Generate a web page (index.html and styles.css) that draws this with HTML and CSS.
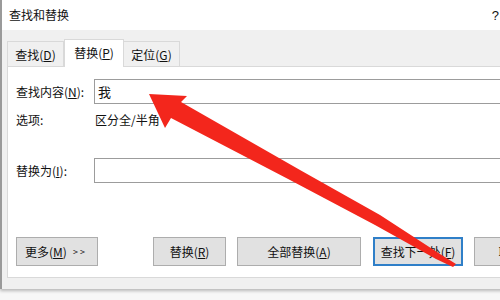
FILE: index.html
```html
<!DOCTYPE html>
<html lang="zh-CN">
<head>
<meta charset="utf-8">
<title>查找和替换</title>
<link rel="stylesheet" href="styles.css">
</head>
<body>
<div class="window">
  <div class="titlebar">
    <span class="title">查找和替换</span>
    <span class="help">?</span>
  </div>
  <div class="tabs">
    <div class="tab">查找(<u>D</u>)</div>
    <div class="tab active">替换(<u>P</u>)</div>
    <div class="tab">定位(<u>G</u>)</div>
  </div>
  <div class="panel">
    <div class="row first">
      <span class="label">查找内容(<u>N</u>):</span>
      <div class="input">我</div>
    </div>
    <div class="row options">
      <span class="label">选项:</span>
      <span class="optval">区分全/半角</span>
    </div>
    <div class="row replace">
      <span class="label">替换为(<u>I</u>):</span>
      <div class="input"></div>
    </div>
    <div class="buttons">
      <div class="btn more">更多(<u>M</u>) <span class="chev">&gt; &gt;</span></div>
      <div class="btn rep">替换(<u>R</u>)</div>
      <div class="btn all">全部替换(<u>A</u>)</div>
      <div class="btn next">查找下一处(<u>F</u>)</div>
      <div class="btn cancel">取消</div>
    </div>
  </div>
</div>
<svg class="arrow" width="500" height="300" viewBox="0 0 500 300" xmlns="http://www.w3.org/2000/svg">
  <polygon points="149,94 187,96 181,102 300,170 380,215 440,254 456,264 453,267 436,259 375,225 290,180 171,118 165,128" fill="#f3261c"/>
</svg>
</body>
</html>
```
FILE: styles.css
```css
html, body {
  margin: 0;
  padding: 0;
}
body {
  width: 500px;
  height: 300px;
  overflow: hidden;
  background: #f7f7f7;
  position: relative;
  font-family: "Noto Sans CJK SC", "Noto Sans", sans-serif;
  font-size: 12px;
  color: #111;
}
u {
  text-decoration: underline;
  text-underline-offset: 1px;
}
.window {
  width: 520px;
  height: 289px;
  background: #f0f0f0;
  border-left: 2px solid #9a9a9a;
  box-sizing: border-box;
  box-shadow: 0 2px 3px rgba(0,0,0,0.25);
}
.titlebar {
  height: 30px;
  background: #fff;
  display: flex;
  align-items: center;
  padding-left: 7px;
  width: 500px;
  box-sizing: border-box;
  position: relative;
}
.title {
  line-height: 16px;
  padding-bottom: 1px;
}
.help {
  margin-left: auto;
  margin-right: 3px;
  font-family: "Liberation Sans", sans-serif;
  font-size: 13px;
}
.tabs {
  display: flex;
  align-items: flex-end;
  padding-left: 5px;
  height: 36px;
  box-sizing: border-box;
}
.tab {
  height: 25px;
  box-sizing: border-box;
  border: 1px solid #d9d9d9;
  border-bottom: none;
  background: #f0f0f0;
  display: flex;
  align-items: center;
  justify-content: center;
  width: 57px;
  margin-bottom: 0;
}
.tab + .tab {
  border-left: none;
}
.tab:nth-child(3) {
  width: 56px;
}
.tab.active {
  height: 28px;
  width: 60px;
  background: #fff;
  border-left: 1px solid #d9d9d9;
  margin-bottom: -1px;
  position: relative;
  padding-bottom: 2px;
}
.tab.active + .tab {
  border-left: none;
}
.panel {
  margin-left: 5px;
  width: 520px;
  height: 212px;
  box-sizing: border-box;
  background: #fff;
  border: 1px solid #d9d9d9;
  padding-left: 8px;
}
.row {
  display: flex;
  align-items: center;
}
.label {
  width: 78px;
  flex: none;
}
.row.first {
  margin-top: 12px;
}
.input {
  width: 420px;
  height: 25px;
  box-sizing: border-box;
  border: 1px solid #9c9c9c;
  display: flex;
  align-items: center;
  padding-left: 3px;
  font-size: 13px;
}
.row.options {
  margin-top: 5px;
  height: 20px;
}
.optval {
  padding-left: 1px;
}
.row.replace {
  margin-top: 29px;
}
.buttons {
  margin-top: 54px;
  display: flex;
  gap: 11px;
}
.btn {
  height: 29px;
  box-sizing: border-box;
  background: #e1e1e1;
  border: 1px solid #adadad;
  display: flex;
  align-items: center;
  justify-content: center;
  flex: none;
}
.btn.more {
  width: 82px;
  justify-content: flex-start;
  padding-left: 8px;
  margin-right: 44px;
}
.chev {
  font-size: 9px;
  margin-left: 6px;
  letter-spacing: 0;
}
.btn.rep {
  width: 73px;
}
.btn.all {
  width: 124px;
}
.btn.next {
  width: 90px;
  margin-left: 1px;
  border: 2px solid #2f7fc8;
}
.btn.cancel {
  width: 73px;
}
.arrow {
  position: absolute;
  left: 0;
  top: 0;
}
```
